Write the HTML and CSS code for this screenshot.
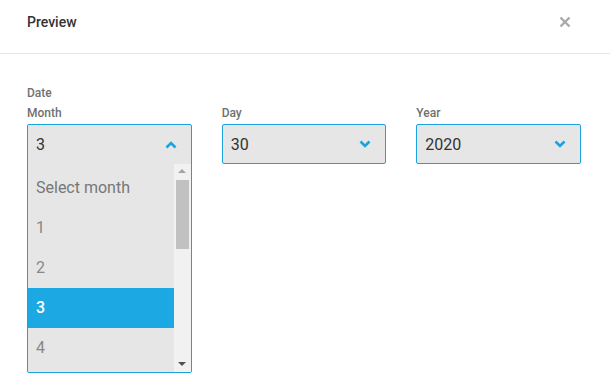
FILE: index.html
```html
<!DOCTYPE html>
<html lang="en">
<head>
<meta charset="utf-8">
<title>Preview</title>
<link rel="stylesheet" href="styles.css">
</head>
<body>
<div class="modal">
  <header class="modal-header">
    <h1 class="modal-title">Preview</h1>
    <button class="close" aria-label="Close">
      <svg width="12" height="12" viewBox="0 0 12 12"><path d="M1.5 1.5 L10.5 10.5 M10.5 1.5 L1.5 10.5" stroke="#a9a9a9" stroke-width="2.4" fill="none"/></svg>
    </button>
  </header>
  <div class="modal-body">
    <div class="group-label">Date</div>
    <div class="fields">
      <div class="field">
        <div class="field-label">Month</div>
        <div class="select open">
          <div class="select-value">
            <span>3</span>
            <svg class="chev" width="12" height="8" viewBox="0 0 12 8"><path d="M1.5 6.5 L6 2 L10.5 6.5" stroke="#1ba3e0" stroke-width="2.6" fill="none"/></svg>
          </div>
          <div class="dropdown">
            <ul class="options">
              <li class="option placeholder">Select month</li>
              <li class="option">1</li>
              <li class="option">2</li>
              <li class="option selected">3</li>
              <li class="option">4</li>
            </ul>
            <div class="scrollbar">
              <span class="arrow up"></span>
              <span class="thumb"></span>
              <span class="arrow down"></span>
            </div>
          </div>
        </div>
      </div>
      <div class="field">
        <div class="field-label">Day</div>
        <div class="select">
          <div class="select-value">
            <span>30</span>
            <svg class="chev" width="12" height="8" viewBox="0 0 12 8"><path d="M1.5 1.5 L6 6 L10.5 1.5" stroke="#1ba3e0" stroke-width="2.6" fill="none"/></svg>
          </div>
        </div>
      </div>
      <div class="field">
        <div class="field-label">Year</div>
        <div class="select">
          <div class="select-value">
            <span>2020</span>
            <svg class="chev" width="12" height="8" viewBox="0 0 12 8"><path d="M1.5 1.5 L6 6 L10.5 1.5" stroke="#1ba3e0" stroke-width="2.6" fill="none"/></svg>
          </div>
        </div>
      </div>
    </div>
  </div>
</div>
</body>
</html>
```
FILE: styles.css
```css
* { box-sizing: border-box; }
html, body { margin: 0; padding: 0; background: #fff; }
body { font-family: Roboto, "Liberation Sans", Arial, sans-serif; color: #333; width: 610px; height: 392px; overflow: hidden; }

.modal-header {
  height: 54px;
  border-bottom: 1px solid #e6e6e6;
  display: flex;
  align-items: flex-start;
  justify-content: space-between;
  padding: 13px 39px 0 27px;
}
.modal-title { margin: 0; font-size: 14px; line-height: 18px; font-weight: 500; color: #333; }
.close { border: 0; background: none; padding: 0; margin-top: 3px; width: 12px; height: 12px; display: block; }
.close svg { display: block; }

.modal-body { padding: 31px 29px 0 27px; }
.group-label, .field-label { font-size: 12px; line-height: 16px; font-weight: 500; color: #707070; }
.group-label { margin-bottom: 4px; }
.field-label { margin-bottom: 3px; }

.fields { display: grid; grid-template-columns: 1fr 1fr 1fr; column-gap: 30px; align-items: start; }

.select {
  border: 1px solid #1ba3e0;
  border-radius: 2px;
  background: #e6e6e6;
}
.select-value {
  height: 38px;
  display: flex;
  align-items: center;
  justify-content: space-between;
  padding: 0 14px 0 8px;
  font-size: 16px;
  color: #333;
}
.chev { display: block; }
.select.open .select-value { height: 39px; }

.dropdown { display: flex; height: 208px; }
.options { list-style: none; margin: 0; padding: 4px 0 0; flex: 1; overflow: hidden; }
.option { height: 40px; line-height: 40px; padding-left: 8px; font-size: 16px; color: #888; }
.option.placeholder { color: #777; }
.option.selected { background: #1ba8e3; color: #fff; font-weight: 500; }

.scrollbar {
  width: 17px;
  background: #f1f1f1;
  display: flex;
  flex-direction: column;
  align-items: center;
  padding: 5px 0 6px;
}
.arrow { width: 0; height: 0; border-left: 4px solid transparent; border-right: 4px solid transparent; }
.arrow.up { border-bottom: 4px solid #a3a3a3; }
.arrow.down { border-top: 4px solid #505050; margin-top: auto; }
.thumb { width: 13px; height: 69px; background: #c1c1c1; margin-top: 7px; }
```
